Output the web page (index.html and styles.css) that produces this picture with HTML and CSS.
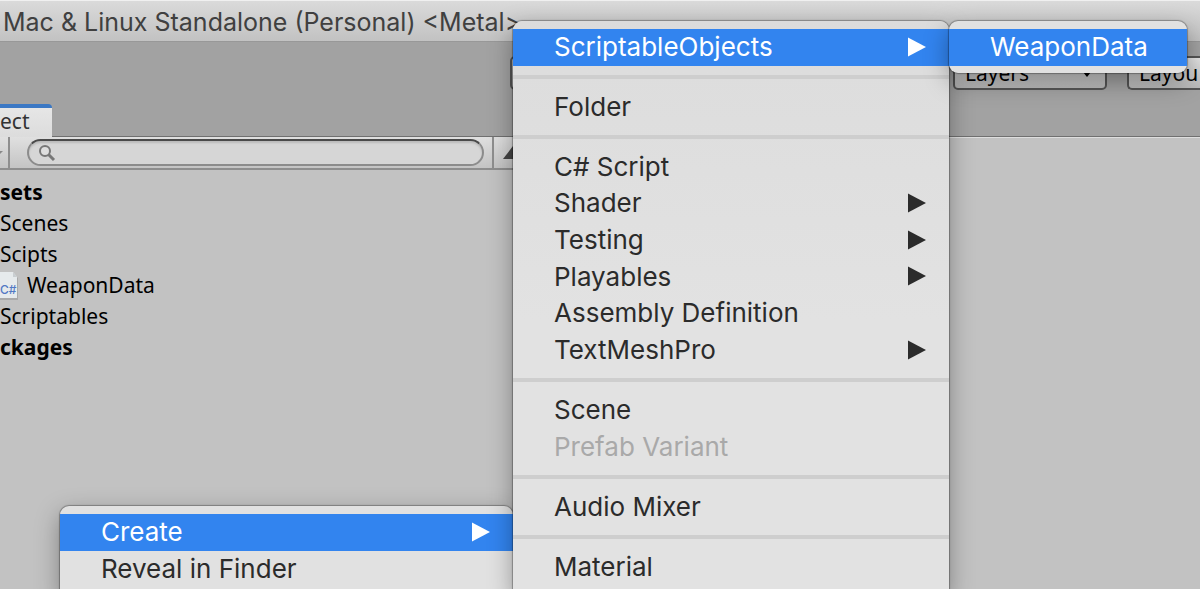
FILE: index.html
```html
<!DOCTYPE html>
<html lang="en">
<head>
    <meta charset="UTF-8">
    <meta name="viewport" content="width=device-width, initial-scale=1.0">
    <title>Project</title>
    <link rel="stylesheet" href="styles.css">
</head>
<body>
    <svg class="defs" aria-hidden="true">
        <symbol id="arrow" viewBox="0 0 18 20">
            <path d="M0 0.5 L18 10 L0 19.5 Z" fill="currentColor"/>
        </symbol>
    </svg>

    <header class="title-bar">Mac &amp; Linux Standalone (Personal) &lt;Metal&gt;</header>

    <div class="toolbar">
        <button type="button" class="tool-btn tool-wide" aria-label="Account"></button>
        <div class="drop">
            <select class="tool-btn" aria-label="Layers"><option>Layers</option></select>
            <svg class="drop-arrow" viewBox="0 0 8 5"><path d="M0 0 H8 L4 5 Z"/></svg>
        </div>
        <div class="drop">
            <select class="tool-btn tool-edge" aria-label="Layout"><option>Layou</option></select>
        </div>
    </div>

    <main class="workspace">
        <section class="project">
            <div class="tabs">
                <button type="button" class="tab">ect</button>
            </div>
            <div class="search-row">
                <button type="button" class="create-btn" aria-label="Create">
                    <svg viewBox="0 0 3 4"><path d="M0 0 H3 L0 3 Z" fill="#888"/></svg>
                </button>
                <label class="search">
                    <svg viewBox="0 0 18 18">
                        <circle cx="7" cy="7" r="5" fill="#dedede" stroke="#777" stroke-width="2"/>
                        <path d="M10.500 10.500 L16 16" stroke="#777" stroke-width="3"/>
                    </svg>
                    <input type="text" aria-label="Search">
                </label>
                <button type="button" class="filter-btn" aria-label="Filter">
                    <svg viewBox="0 0 20 14"><path d="M0 13 L10 0 L20 13 Z" fill="#444"/></svg>
                </button>
            </div>
            <ul class="tree">
                <li class="root">sets</li>
                <li>Scenes</li>
                <li>Scipts</li>
                <li class="file">
                    <svg viewBox="0 0 18 28">
                        <path d="M0 1 H13 L18 6 V28 H0 Z" fill="#a9a9a9"/>
                        <path d="M0 0 H13 L17 5 V26 H0 Z" fill="#e6eaec"/>
                        <path d="M13 0 V5 H17 Z" fill="#c9ced1"/>
                        <text x="0" y="22">C#</text>
                    </svg>
                    WeaponData
                </li>
                <li>Scriptables</li>
                <li class="root">ckages</li>
            </ul>
        </section>
        <section class="inspector"></section>
    </main>

    <!-- Context menu -->
    <div class="menu menu-context">
        <button type="button" class="item active">Create <svg><use href="#arrow"/></svg></button>
        <button type="button" class="item">Reveal in Finder</button>
    </div>

    <!-- Create submenu -->
    <div class="menu menu-create">
        <button type="button" class="item active">ScriptableObjects <svg><use href="#arrow"/></svg></button>
        <hr>
        <button type="button" class="item">Folder</button>
        <hr>
        <div class="group">
            <button type="button" class="item">C# Script</button>
            <button type="button" class="item">Shader <svg><use href="#arrow"/></svg></button>
            <button type="button" class="item">Testing <svg><use href="#arrow"/></svg></button>
            <button type="button" class="item">Playables <svg><use href="#arrow"/></svg></button>
            <button type="button" class="item">Assembly Definition</button>
            <button type="button" class="item">TextMeshPro <svg><use href="#arrow"/></svg></button>
        </div>
        <hr>
        <button type="button" class="item">Scene</button>
        <button type="button" class="item" disabled>Prefab Variant</button>
        <hr>
        <button type="button" class="item">Audio Mixer</button>
        <hr>
        <button type="button" class="item">Material</button>
    </div>

    <!-- ScriptableObjects submenu -->
    <div class="menu menu-objects">
        <button type="button" class="item active">WeaponData</button>
    </div>
</body>
</html>
```
FILE: styles.css
```css
* {
  box-sizing: border-box;
}

body {
  margin: 0;
  height: 100vh;
  overflow: hidden;
  position: relative;
  display: flex;
  flex-direction: column;
  background: #a2a2a2;
  color: #000;
  font-family: "Noto Sans", sans-serif;
  font-size: 21px;
}

button,
select,
input {
  font: inherit;
  color: inherit;
  margin: 0;
  padding: 0;
  border: none;
  background: none;
}

.defs {
  display: none;
}

/* Title bar */
.title-bar {
  height: 42px;
  flex: none;
  padding-left: 3px;
  line-height: 43px;
  font-family: Inter, sans-serif;
  font-size: 25px;
  color: #404040;
  white-space: nowrap;
  background: linear-gradient(#dadada, #c2c2c2);
  border-top: 1px solid #f0f0f0;
  border-bottom: 1px solid #989898;
}

/* Toolbar */
.toolbar {
  flex: none;
  display: flex;
  gap: 20px;
  height: 62px;
  padding: 14px 0 0 510px;
}

.tool-btn {
  width: 154px;
  height: 34px;
  padding-left: 10px;
  border: 2px solid #555;
  border-radius: 5px;
  background: linear-gradient(#e4e4e4, #b8b8b8);
  appearance: none;
}

.tool-wide {
  flex: 1;
}

.tool-edge {
  width: 73px;
  border-right: none;
  border-radius: 5px 0 0 5px;
}

.drop {
  position: relative;
}

.drop-arrow {
  position: absolute;
  right: 16px;
  top: 16px;
  width: 8px;
  height: 5px;
}

/* Project panel */
.workspace {
  flex: 1;
  display: flex;
  align-items: stretch;
}

.project {
  display: flex;
  flex-direction: column;
  width: 45%;
}

.inspector {
  flex: 1;
  margin-top: 32px;
  background: #c2c2c2;
  border-top: 1px solid #707070;
  box-shadow: inset 0 1px #dedede;
}

.tabs {
  height: 32px;
}

.tab {
  position: relative;
  width: 52px;
  height: 33px;
  padding-bottom: 2px;
  text-align: left;
  line-height: 25px;
  border-top: 4px solid #3b78c4;
  border-radius: 0 4px 0 0;
  background: linear-gradient(#e6e6e6, #dcdcdc);
  color: #333;
}

.search-row {
  display: flex;
  height: 34px;
  border-top: 1px solid #707070;
  border-bottom: 2px solid #8e8e8e;
  background: linear-gradient(#e0e0e0, #c4c4c4);
}

.create-btn {
  width: 10px;
  margin-right: 17px;
  text-align: left;
  border-right: 2px solid #8e8e8e;
}

.create-btn svg {
  display: block;
  width: 3px;
  height: 4px;
}

.search {
  flex: 1;
  display: flex;
  align-items: center;
  margin: 2px 8px 2px 0;
  padding-left: 9px;
  border: 2px solid #8c8c8c;
  border-top-color: #4a4a4a;
  border-radius: 14px;
  background: #d6d6d6;
  box-shadow: inset 0 2px 2px #bbb;
}

.search svg {
  width: 18px;
  height: 18px;
}

.search input {
  flex: 1;
  min-width: 0;
  outline: none;
}

.filter-btn {
  width: 48px;
  padding-left: 9px;
  text-align: left;
  border-left: 2px solid #8e8e8e;
}

.filter-btn svg {
  display: block;
  width: 20px;
  height: 14px;
}

/* Tree */
.tree {
  flex: 1;
  margin: 0;
  padding: 7px 0 0;
  list-style: none;
  line-height: 31px;
  background: #c2c2c2;
}

.tree .root {
  font-weight: bold;
}

.tree .file {
  display: flex;
  align-items: center;
  gap: 9px;
}

.tree svg {
  width: 18px;
  height: 28px;
}

.tree text {
  font-family: Inter, sans-serif;
  font-size: 12px;
  font-weight: 500;
  fill: #5279c4;
}

/* Menus */
.menu {
  position: absolute;
  padding: 8px 0 7px;
  border-radius: 9px;
  background: #e1e1e1;
  box-shadow: 0 0 1px 1px rgba(0, 0, 0, 0.3), 0 8px 24px rgba(0, 0, 0, 0.35);
  color: #2b2b2b;
  font-family: Inter, sans-serif;
  font-size: 26px;
}

.menu-context {
  top: 506px;
  left: 60px;
  width: 453px;
  border-radius: 9px 9px 0 0;
}

.menu-create {
  top: 21px;
  left: 513px;
  width: 436px;
  border-radius: 9px 9px 0 0;
  background: linear-gradient(#dcdcdc, #e2e2e2 300px);
}

.menu-objects {
  top: 21px;
  left: 949px;
  width: 238px;
}

.item {
  display: flex;
  align-items: center;
  justify-content: space-between;
  width: 100%;
  height: 37px;
  padding: 0 23px 2px 41px;
  text-align: left;
  white-space: nowrap;
}

.item svg {
  width: 18px;
  height: 20px;
}

.item.active {
  background: #3284ef;
  color: #fff;
}

.item:disabled {
  color: #a9a9a9;
}

.group {
  display: grid;
  grid-auto-rows: 1fr;
  height: 220px;
}

.group .item {
  height: auto;
}

.menu hr {
  height: 4px;
  margin: 9px 0 10px;
  border: none;
  background: #cecece;
}
```
